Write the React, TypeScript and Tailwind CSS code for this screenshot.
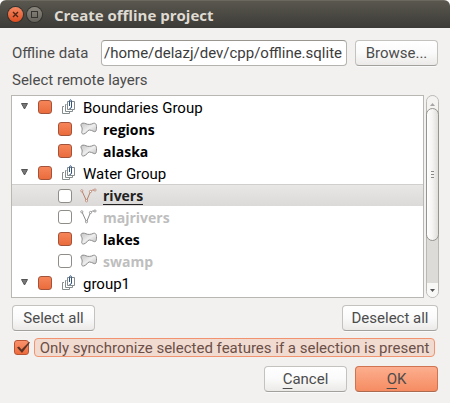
import { useState } from "react";

type Kind = "group" | "polygon" | "line";

interface Layer {
  name: string;
  kind: Kind;
  checked: boolean;
  muted?: boolean;
  selected?: boolean;
}

const layers: Layer[] = [
  { name: "Boundaries Group", kind: "group", checked: true },
  { name: "regions", kind: "polygon", checked: true },
  { name: "alaska", kind: "polygon", checked: true },
  { name: "Water Group", kind: "group", checked: true },
  { name: "rivers", kind: "line", checked: false, selected: true },
  { name: "majrivers", kind: "line", checked: false, muted: true },
  { name: "lakes", kind: "polygon", checked: true },
  { name: "swamp", kind: "polygon", checked: false, muted: true },
  { name: "group1", kind: "group", checked: true },
];

const buttonBase =
  "h-[26px] rounded border text-center text-[15px] leading-5 text-[#4c4c4c] shadow-[0_1px_0_#fafafa]";
const plainButton =
  "border-[#c4c2be] border-b-[#a3a19c] bg-linear-to-b from-white via-[#fafafa] to-[#ebeae8]";

function GroupIcon() {
  return (
    <svg width="15" height="16" viewBox="0 0 15 16" fill="none" className="shrink-0">
      <path d="M2 7.500H.5v7h7V13" stroke="#858c8e" />
      <path d="M4.500 5.500h-1v7h7V11" stroke="#858c8e" />
      <path d="M5.500 10.500v-8h7v8Z" stroke="#858c8e" />
      <path d="M7.500 7V2.500Q7.500 .8 8.500 .8T9.500 2.500v5.500Q9.500 9.500 7.500 9.500" stroke="#2f5380" />
    </svg>
  );
}

function PolygonIcon() {
  return (
    <svg width="18" height="16" viewBox="0 0 18 16" className="shrink-0">
      <defs>
        <linearGradient id="land" x1="0" y1="0" x2="1" y2="1">
          <stop offset="0" stopColor="#c4c4c4" />
          <stop offset=".5" stopColor="#eeeeee" />
          <stop offset="1" stopColor="#b8b8b8" />
        </linearGradient>
      </defs>
      <path
        d="M1 3.500C1.500 1.800 4 1.800 6 2.800S11 3.500 13 2.500S16.500 3 16.500 5.500S16.500 9.500 15.500 10.500S12 9 9.500 9S6.500 13 3.500 13S2.200 10 2.200 8S.7 5.500 1 3.500Z"
        fill="url(#land)"
        stroke="#8c8c8c"
      />
    </svg>
  );
}

function LineIcon({ color }: { color: string }) {
  return (
    <svg width="18" height="16" viewBox="0 0 18 16" fill="none" className="shrink-0">
      <path d="M2 3L6.500 13L10.500 3.500Q12 1.500 15 2" stroke={color} />
      <g fill="#fff" stroke={color} strokeWidth=".8">
        <circle cx="1.800" cy="2.800" r="1.100" />
        <circle cx="6.500" cy="12.800" r="1.100" />
        <circle cx="10.500" cy="3.500" r="1.100" />
        <circle cx="15" cy="2" r="1.100" />
      </g>
    </svg>
  );
}

function LayerRow({ layer }: { layer: Layer }) {
  const [checked, setChecked] = useState(layer.checked);
  const group = layer.kind === "group";
  return (
    <li
      className={`flex h-[22px] items-center ${
        layer.selected ? "border-t border-[#d0cfcd] bg-linear-to-b from-[#e8e7e6] to-[#dbdad8]" : ""
      }`}
    >
      {group ? (
        <button type="button" aria-label="Collapse" className="ml-2 flex w-[18px] shrink-0">
          <svg width="9" height="8" viewBox="0 0 9 8">
            <path d="M1.500 .5h6L4.500 6Z" fill="#777" stroke="#555" />
          </svg>
        </button>
      ) : (
        <span className="w-[46px] shrink-0" />
      )}
      <label className="flex items-center">
        <input
          type="checkbox"
          checked={checked}
          onChange={(e) => setChecked(e.target.checked)}
          className="h-[14px] w-[14px] shrink-0 appearance-none rounded-[3px] border border-[#8f8d88] bg-white checked:border-[#a3533a] checked:bg-linear-to-b checked:from-[#f68559] checked:to-[#ea6c3c]"
        />
        <span className={`flex ${group ? "ml-2.5 w-[21px]" : "ml-2 w-[23px]"}`}>
          {layer.kind === "group" && <GroupIcon />}
          {layer.kind === "polygon" && <PolygonIcon />}
          {layer.kind === "line" && <LineIcon color={layer.selected ? "#b9806c" : "#8a8a8a"} />}
        </span>
        <span
          className={`${group ? "text-[15px]" : "font-['Open_Sans','Noto_Sans',sans-serif] text-sm font-bold"} ${
            layer.selected
              ? "border-b border-[#222] leading-[17px] text-[#222]"
              : layer.muted
                ? "pt-0.5 leading-5 text-[#bebebe]"
                : "pt-0.5 leading-5 text-black"
          }`}
        >
          {layer.name}
        </span>
      </label>
    </li>
  );
}

function ScrollBar() {
  return (
    <div className="flex w-[13px] flex-col rounded-full border border-[#bab8b3] bg-[#dcdbd8]">
      <button type="button" aria-label="Scroll up" className="flex h-4 items-center justify-center rounded-t-full bg-[#f4f3f2]">
        <svg width="5" height="3" viewBox="0 0 5 3"><path d="M0 3L2.500 0L5 3Z" fill="#a5a5a5" /></svg>
      </button>
      <div className="-mx-px -mt-1 flex h-[133px] flex-col items-center justify-center gap-0.5 rounded-full border border-[#96948f] bg-linear-to-r from-white via-[#f4f3f2] to-[#dfdedb]">
        <span className="h-px w-[3px] bg-[#8b8985]" />
        <span className="h-px w-[3px] bg-[#8b8985]" />
        <span className="h-px w-[3px] bg-[#8b8985]" />
      </div>
      <div className="flex-1" />
      <button type="button" aria-label="Scroll down" className="flex h-[14px] items-center justify-center rounded-t-sm rounded-b-full bg-[#f8f8f7]">
        <svg width="5" height="3" viewBox="0 0 5 3"><path d="M0 0h5L2.500 3Z" fill="#555" /></svg>
      </button>
    </div>
  );
}

export default function App() {
  const [sync, setSync] = useState(true);
  return (
    <div className="bg-white font-[Roboto,'Noto_Sans',sans-serif] text-[15px] text-[#4c4c4c]">
      <div className="overflow-hidden rounded-t-md bg-[#f2f1f0]">
        <header className="flex h-7 items-center border-t border-[#6b695f] bg-linear-to-b from-[#59574e] to-[#3c3b37] pl-2">
          <button type="button" aria-label="Close" className="mr-1 flex h-[15px] w-[15px] items-center justify-center rounded-full bg-linear-to-b from-[#f58962] to-[#df4b1c] ring-1 ring-[#33322e]">
            <svg width="7" height="7" viewBox="0 0 7 7"><path d="M1 1l5 5M6 1L1 6" stroke="#522414" strokeWidth="1.400" /></svg>
          </button>
          <button type="button" aria-label="Maximize" className="flex h-[15px] w-[15px] items-center justify-center rounded-full bg-linear-to-b from-[#8a887e] to-[#64625a] ring-1 ring-[#33322e]">
            <span className="h-[7px] w-[7px] border border-[#34332f]" />
          </button>
          <h1 className="ml-3 font-['Open_Sans','Noto_Sans',sans-serif] text-[15px] leading-5 font-bold text-[#dfdbd2]">
            Create offline project
          </h1>
        </header>

        <main className="px-3 pt-3 pb-3">
          <div className="flex items-center">
            <label htmlFor="data" className="w-[89px] shrink-0">Offline data</label>
            <input
              id="data"
              defaultValue="/home/delazj/dev/cpp/offline.sqlite"
              className="h-[26px] min-w-0 flex-1 rounded border border-[#b5b3ae] border-t-[#98968f] bg-white pr-1 text-right text-[15px] text-[#3c3c3c]"
            />
            <button type="button" className={`ml-2 w-[83px] ${buttonBase} ${plainButton}`}>Browse...</button>
          </div>

          <h2 id="layers" className="h-[29px] pt-1 leading-5">Select remote layers</h2>

          <div className="-mx-px flex gap-0.5">
            <ul aria-labelledby="layers" className="flex-1 border border-[#b9b7b2] bg-white pb-[3px]">
              {layers.map((l) => (
                <LayerRow key={l.name} layer={l} />
              ))}
            </ul>
            <ScrollBar />
          </div>

          <div className="mt-[7px] flex justify-between">
            <button type="button" className={`w-[83px] ${buttonBase} ${plainButton}`}>Select all</button>
            <button type="button" className={`w-24 ${buttonBase} ${plainButton}`}>Deselect all</button>
          </div>

          <div className="mt-[7px] flex items-center">
            <span className="relative ml-0.5 flex">
              <input
                id="sync"
                type="checkbox"
                checked={sync}
                onChange={(e) => setSync(e.target.checked)}
                className="h-[15px] w-[15px] appearance-none rounded-[3px] border border-[#b85434] bg-white checked:bg-linear-to-b checked:from-[#f9926c] checked:to-[#ee6a3a]"
              />
              {sync && (
                <svg width="15" height="13" viewBox="0 0 15 13" className="pointer-events-none absolute top-0.5 left-0.5">
                  <path d="M1 5.500L3 4.500L5.500 7.500L13 0L14 .5L6 11Z" fill="#5c3325" />
                </svg>
              )}
            </span>
            <label htmlFor="sync" className="mr-[3px] ml-[5px] h-[19px] flex-1 rounded border border-[#f0936e] bg-[#f1dbd1] text-center leading-[19px] whitespace-nowrap text-[#6b4f47]">
              Only synchronize selected features if a selection is present
            </label>
          </div>

          <div className="mt-[9px] flex justify-end gap-2">
            <button type="button" className={`w-[83px] ${buttonBase} ${plainButton}`}>
              <u className="underline-offset-4">C</u>ancel
            </button>
            <button type="button" className={`w-[83px] ${buttonBase} border-[#cf7350] border-b-[#a96a50] bg-linear-to-b from-[#fcae8e] to-[#f58c62]`}>
              <u className="underline-offset-4">O</u>K
            </button>
          </div>
        </main>
      </div>
    </div>
  );
}
